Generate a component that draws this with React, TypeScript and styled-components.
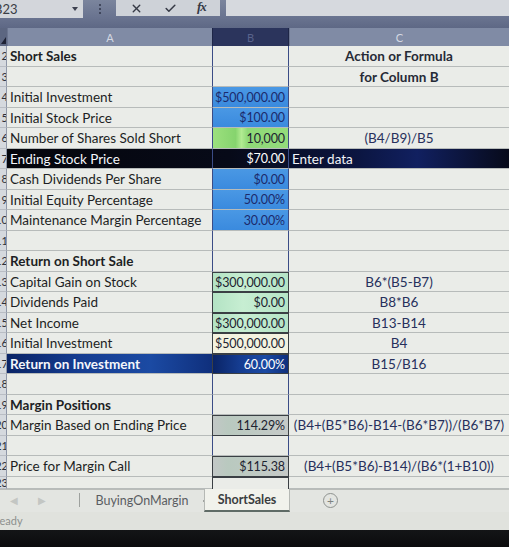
import React from "react";
import styled, { createGlobalStyle, css } from "styled-components";
import { X, Check } from "lucide-react";

const GlobalStyle = createGlobalStyle`
  body {
    margin: 0;
    background: #e6e8e4;
    font-family: Lato, "Open Sans", sans-serif;
  }
`;

const Screen = styled.div`
  width: 509px;
  height: 547px;
  overflow: hidden;
  display: flex;
  flex-direction: column;
  background: #e8eae6;
`;

/* ---------- formula bar ---------- */
const Toolbar = styled.div`
  height: 28px;
  flex: none;
  display: flex;
  align-items: flex-start;
  background: linear-gradient(180deg, #7b859d 0%, #6a7490 60%, #5e6885 100%);
`;

const NameBox = styled.div`
  width: 83px;
  height: 18px;
  box-sizing: border-box;
  display: flex;
  align-items: center;
  justify-content: space-between;
  padding-right: 5px;
  background: #d3d6db;
  color: #3a3d45;
  font-size: 13px;
  overflow: hidden;
  span {
    margin-left: -6px;
  }
`;

const Caret = styled.div`
  width: 0;
  height: 0;
  border-left: 3px solid transparent;
  border-right: 3px solid transparent;
  border-top: 4px solid #3d4150;
`;

const Dots = styled.div`
  width: 33px;
  height: 17px;
  display: flex;
  flex-direction: column;
  align-items: center;
  justify-content: center;
  gap: 2px;
  i {
    width: 2px;
    height: 2px;
    border-radius: 1px;
    background: #30364a;
  }
`;

const EditBox = styled.div`
  width: 104px;
  height: 16px;
  display: flex;
  align-items: center;
  justify-content: space-around;
  padding: 0 4px;
  box-sizing: border-box;
  background: #ced2d8;
  color: #353945;
`;

const Fx = styled.span`
  font-family: "Liberation Serif", serif;
  font-style: italic;
  font-size: 13px;
  font-weight: bold;
  letter-spacing: -1px;
  margin-top: -2px;
`;

const FormulaInput = styled.div`
  flex: 1;
  margin-left: 6px;
  height: 16px;
  background: #d6d9de;
`;

/* ---------- grid ---------- */
const ColumnHeaders = styled.div`
  height: 18px;
  flex: none;
  display: grid;
  grid-template-columns: 7px 205px 77px 1fr;
  background: #808ba5;
`;

const Corner = styled.div`
  background: #5c6681;
  position: relative;
  &::after {
    content: "";
    position: absolute;
    right: 1px;
    bottom: 2px;
    border-left: 5px solid transparent;
    border-bottom: 7px solid #1d2133;
  }
`;

const ColHead = styled.div<{ $selected?: boolean }>`
  display: flex;
  align-items: center;
  justify-content: center;
  font-size: 11px;
  color: #d4d9e3;
  border-left: 1px solid #6b7590;
  ${(p) =>
    p.$selected &&
    css`
      background: #2b345c;
      color: #59638c;
      border-left: 1px solid #1e2647;
      border-right: 1px solid #1e2647;
    `}
`;

const Sheet = styled.div`
  flex: none;
  display: flex;
  flex-direction: column;
`;

type RowTone = "plain" | "dark";

const Row = styled.div<{ $tone: RowTone; $short?: boolean }>`
  height: ${(p) => (p.$short ? "12px" : "20.5px")};
  display: grid;
  grid-template-columns: 7px 205px 77px 1fr;
  background: ${(p) =>
    p.$tone === "dark"
      ? "linear-gradient(90deg, #05060c 0%, #070a18 45%, #0b1540 70%, #112060 82%, #070a1a 100%)"
      : "#eaece8"};
`;

const RowNum = styled.div`
  background: #d5d9de;
  border-right: 1px solid #8f97a8;
  border-bottom: 1px solid #b9bdc4;
  box-sizing: border-box;
  overflow: hidden;
  display: flex;
  justify-content: flex-end;
  align-items: center;
  font-size: 11px;
  color: #2c2f38;
  white-space: nowrap;
  span {
    margin-right: -2px;
  }
`;

type Fill = "none" | "blue" | "green" | "mint" | "cream" | "gray" | "navy";

const fills: Record<Fill, string> = {
  none: "transparent",
  blue: "linear-gradient(180deg, #4a98e4 0%, #3a8ade 100%)",
  green:
    "linear-gradient(90deg, #9ce07e 0%, #86d46e 30%, #b2eb92 38%, #8fd977 46%, #94dc7b 100%)",
  mint: "linear-gradient(90deg, #b3e3c4 0%, #c7eed2 40%, #b5e4c6 100%)",
  cream: "#f3f2e0",
  gray: "linear-gradient(90deg, #c2c7c6 0%, #b9c9bf 20%, #c6cac8 100%)",
  navy: "linear-gradient(90deg, #0a2466 0%, #153c90 35%, #1b4aa3 70%, #0f2f7c 100%)",
};

const Cell = styled.div<{
  $align?: "left" | "center" | "right";
  $bold?: boolean;
  $fill?: Fill;
  $ink?: string;
  $boxed?: boolean;
  $colB?: boolean;
}>`
  box-sizing: border-box;
  display: flex;
  align-items: center;
  justify-content: ${(p) =>
    p.$align === "right" ? "flex-end" : p.$align === "center" ? "center" : "flex-start"};
  padding: 1px 3px 0;
  font-size: ${(p) => (p.$colB ? "12.5px" : "13.5px")};
  font-weight: ${(p) => (p.$bold ? 700 : 400)};
  color: ${(p) => p.$ink || "#1d1f24"};
  white-space: nowrap;
  overflow: visible;
  background: ${(p) => fills[p.$fill || "none"]};
  border-bottom: 1px solid #b7bbba;
  ${(p) =>
    p.$colB &&
    css`
      border-left: 1px solid #3b4c86;
      border-right: 1px solid #3b4c86;
      letter-spacing: -0.1px;
    `}
  ${(p) =>
    p.$boxed &&
    css`
      border: 1px solid #3a3f44;
    `}
`;

/* ---------- sheet tabs + status ---------- */
const TabBar = styled.div`
  height: 22px;
  flex: none;
  display: flex;
  align-items: stretch;
  background: #e3e5e1;
  border-top: 1px solid #b9bcb9;
`;

const Nav = styled.div`
  width: 80px;
  display: flex;
  align-items: center;
  gap: 20px;
  padding-left: 10px;
  box-sizing: border-box;
  color: #c3c6c3;
  font-size: 10px;
  border-right: 1px solid #9ea19e;
  margin: 3px 0 5px;
`;

const Tab = styled.div<{ $active?: boolean }>`
  display: flex;
  align-items: center;
  justify-content: center;
  font-size: 12.5px;
  color: #5a5d62;
  ${(p) =>
    p.$active
      ? css`
          width: 84px;
          margin-top: -1px;
          background: #f1f2ec;
          font-weight: 700;
          color: #3a3d40;
          border-left: 1px solid #b5b8b4;
          border-right: 1px solid #b5b8b4;
          border-bottom: 2px solid #5f6b66;
        `
      : css`
          width: 124px;
        `}
`;

const TabDot = styled.div`
  width: 2px;
  height: 2px;
  align-self: center;
  background: #a0a3a0;
  margin: 0 -1px;
`;

const AddSheet = styled.div`
  margin-left: 33px;
  align-self: center;
  width: 13px;
  height: 13px;
  border-radius: 50%;
  border: 1px solid #8e928f;
  color: #7e827f;
  display: flex;
  align-items: center;
  justify-content: center;
  font-size: 12px;
  line-height: 1;
`;

const StatusBar = styled.div`
  height: 18px;
  flex: none;
  display: flex;
  align-items: center;
  background: #e0e2dd;
  overflow: hidden;
  span {
    margin-left: -7px;
    font-size: 11px;
    color: #8d908d;
  }
`;

const Taskbar = styled.div`
  flex: 1;
  background: linear-gradient(180deg, #141517 0%, #0b0b0d 100%);
`;

type Line = {
  n: number;
  a?: string;
  aBold?: boolean;
  b?: string;
  fill?: Fill;
  boxed?: boolean;
  c?: string;
  cBold?: boolean;
  cLeft?: boolean;
  tone?: RowTone;
  navy?: boolean;
};

const lines: Line[] = [
  { n: 2, a: "Short Sales", aBold: true, c: "Action or Formula", cBold: true },
  { n: 3, c: "for Column B", cBold: true },
  { n: 4, a: "Initial Investment", b: "$500,000.00", fill: "blue" },
  { n: 5, a: "Initial Stock Price", b: "$100.00", fill: "blue" },
  { n: 6, a: "Number of Shares Sold Short", b: "10,000", fill: "green", c: "(B4/B9)/B5" },
  { n: 7, a: "Ending Stock Price", b: "$70.00", c: "Enter data", cLeft: true, tone: "dark" },
  { n: 8, a: "Cash Dividends Per Share", b: "$0.00", fill: "blue" },
  { n: 9, a: "Initial Equity Percentage", b: "50.00%", fill: "blue" },
  { n: 10, a: "Maintenance Margin Percentage", b: "30.00%", fill: "blue" },
  { n: 11 },
  { n: 12, a: "Return on Short Sale", aBold: true },
  { n: 13, a: "Capital Gain on Stock", b: "$300,000.00", fill: "mint", c: "B6*(B5-B7)" },
  { n: 14, a: "Dividends Paid", b: "$0.00", fill: "mint", c: "B8*B6" },
  { n: 15, a: "Net Income", b: "$300,000.00", fill: "mint", c: "B13-B14" },
  { n: 16, a: "Initial Investment", b: "$500,000.00", fill: "cream", c: "B4" },
  { n: 17, a: "Return on Investment", aBold: true, b: "60.00%", navy: true, c: "B15/B16" },
  { n: 18 },
  { n: 19, a: "Margin Positions", aBold: true },
  {
    n: 20,
    a: "Margin Based on Ending Price",
    b: "114.29%",
    fill: "gray",
    boxed: true,
    c: "(B4+(B5*B6)-B14-(B6*B7))/(B6*B7)",
  },
  { n: 21 },
  {
    n: 22,
    a: "Price for Margin Call",
    b: "$115.38",
    fill: "gray",
    boxed: true,
    c: "(B4+(B5*B6)-B14)/(B6*(1+B10))",
  },
];

function SheetRow({ line }: { line: Line }) {
  const dark = line.tone === "dark";
  const light = dark || line.navy;
  const bInk = light ? "#ffffff" : line.fill === "blue" ? "#1c2a6c" : "#1d2330";
  return (
    <Row $tone={line.tone || "plain"}>
      <RowNum>
        <span>{line.n}</span>
      </RowNum>
      <Cell
        $bold={line.aBold}
        $fill={line.navy ? "navy" : "none"}
        $ink={light ? "#f4f6fb" : undefined}
      >
        {line.a}
      </Cell>
      <Cell
        $align="right"
        $colB
        $fill={line.navy ? "navy" : line.fill}
        $boxed={line.boxed || line.fill === "mint" || line.fill === "cream" || line.navy}
        $ink={bInk}
      >
        {line.b}
      </Cell>
      <Cell
        $align={line.cLeft ? "left" : "center"}
        $bold={line.cBold}
        $ink={dark ? "#f2f4f8" : line.cBold ? "#262a36" : "#27305c"}
      >
        {line.c}
      </Cell>
    </Row>
  );
}

export default function App() {
  return (
    <>
      <GlobalStyle />
      <Screen>
        <Toolbar>
          <NameBox>
            <span>B23</span>
            <Caret />
          </NameBox>
          <Dots>
            <i />
            <i />
            <i />
          </Dots>
          <EditBox>
            <X size={13} strokeWidth={2.6} />
            <Check size={13} strokeWidth={2.8} />
            <Fx>fx</Fx>
          </EditBox>
          <FormulaInput />
        </Toolbar>
        <ColumnHeaders>
          <Corner />
          <ColHead>A</ColHead>
          <ColHead $selected>B</ColHead>
          <ColHead>C</ColHead>
        </ColumnHeaders>
        <Sheet>
          {lines.map((line) => (
            <SheetRow key={line.n} line={line} />
          ))}
          <Row $tone="plain" $short>
            <RowNum>
              <span>23</span>
            </RowNum>
            <Cell />
            <Cell $boxed style={{ borderBottom: "none" }} />
            <Cell />
          </Row>
        </Sheet>
        <TabBar>
          <Nav>
            <span>◀</span>
            <span>▶</span>
          </Nav>
          <Tab>BuyingOnMargin</Tab>
          <TabDot />
          <Tab $active>ShortSales</Tab>
          <AddSheet>+</AddSheet>
        </TabBar>
        <StatusBar>
          <span>Ready</span>
        </StatusBar>
        <Taskbar />
      </Screen>
    </>
  );
}
